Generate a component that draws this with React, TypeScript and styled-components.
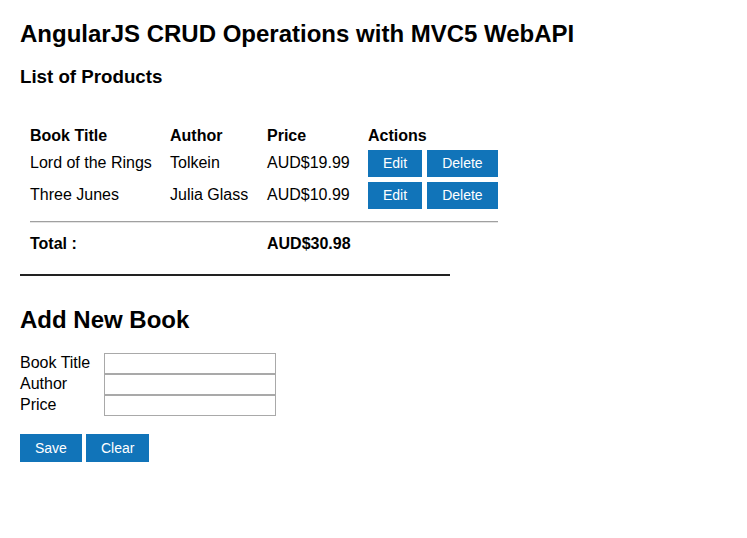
import styled, { createGlobalStyle } from 'styled-components';

const GlobalStyle = createGlobalStyle`
  body {
    margin: 0;
    background: #fff;
    color: #000;
    font-family: "Liberation Sans", Arial, sans-serif;
  }
`;

const Page = styled.main`
  padding: 20px;
`;

const Title = styled.h2`
  margin: 0;
  font-size: 24px;
  font-weight: bold;
`;

const SubTitle = styled.h3`
  margin: 18px 0 0;
  font-size: 18.72px;
  font-weight: bold;
`;

const Table = styled.table`
  margin: 37px 0 0 10px;
  border-collapse: collapse;
  table-layout: fixed;
  width: 468px;
  font-size: 16px;
`;

const HeadCell = styled.th`
  height: 22px;
  padding: 0;
  text-align: left;
  vertical-align: middle;
  font-weight: bold;
`;

const Cell = styled.td<{ $bold?: boolean }>`
  height: ${(p) => (p.$bold ? '19px' : '32px')};
  padding: 0;
  vertical-align: middle;
  font-weight: ${(p) => (p.$bold ? 'bold' : 'normal')};
  white-space: nowrap;
`;

const RuleCell = styled.td`
  padding: 10px 0 11px;
`;

const Rule = styled.div`
  border-top: 1px solid #a0a0a0;
  border-bottom: 1px solid #e4e4e4;
`;

const Actions = styled.div`
  display: flex;
  gap: 5px;
`;

const Button = styled.button<{ $tall?: boolean }>`
  padding: 5px 15px;
  border: none;
  background: #1174b9;
  color: #fff;
  font-family: "Liberation Sans", Arial, sans-serif;
  font-size: 14px;
  line-height: ${(p) => (p.$tall ? '18px' : '17px')};
  cursor: pointer;
`;

const Divider = styled.div`
  width: 430px;
  height: 2px;
  margin-top: 21px;
  background: #222;
`;

const FormTitle = styled.h2`
  margin: 30px 0 0;
  font-size: 24px;
  font-weight: bold;
`;

const Form = styled.div`
  display: grid;
  grid-template-columns: 84px 172px;
  grid-auto-rows: 21px;
  margin-top: 19px;
`;

const Label = styled.label`
  padding-top: 1px;
  font-size: 16px;
  line-height: 18px;
`;

const Input = styled.input`
  box-sizing: border-box;
  width: 172px;
  height: 21px;
  margin: 0;
  border: 1px solid #a9a9a9;
  padding: 1px 2px;
`;

const FormActions = styled.div`
  display: flex;
  gap: 4px;
  margin-top: 18px;
`;

const books = [
  { title: 'Lord of the Rings', author: 'Tolkein', price: 'AUD$19.99' },
  { title: 'Three Junes', author: 'Julia Glass', price: 'AUD$10.99' },
];

export default function App() {
  return (
    <Page>
      <GlobalStyle />
      <Title>AngularJS CRUD Operations with MVC5 WebAPI</Title>
      <SubTitle>List of Products</SubTitle>
      <Table>
        <colgroup>
          <col style={{ width: 140 }} />
          <col style={{ width: 97 }} />
          <col style={{ width: 101 }} />
          <col style={{ width: 130 }} />
        </colgroup>
        <thead>
          <tr>
            <HeadCell>Book Title</HeadCell>
            <HeadCell>Author</HeadCell>
            <HeadCell>Price</HeadCell>
            <HeadCell>Actions</HeadCell>
          </tr>
        </thead>
        <tbody>
          {books.map((b) => (
            <tr key={b.title}>
              <Cell>{b.title}</Cell>
              <Cell>{b.author}</Cell>
              <Cell>{b.price}</Cell>
              <Cell>
                <Actions>
                  <Button>Edit</Button>
                  <Button>Delete</Button>
                </Actions>
              </Cell>
            </tr>
          ))}
          <tr>
            <RuleCell colSpan={4}>
              <Rule />
            </RuleCell>
          </tr>
          <tr>
            <Cell $bold>Total :</Cell>
            <Cell $bold />
            <Cell $bold>AUD$30.98</Cell>
            <Cell $bold />
          </tr>
        </tbody>
      </Table>
      <Divider />
      <FormTitle>Add New Book</FormTitle>
      <Form>
        <Label>Book Title</Label>
        <Input />
        <Label>Author</Label>
        <Input />
        <Label>Price</Label>
        <Input />
      </Form>
      <FormActions>
        <Button $tall>Save</Button>
        <Button $tall>Clear</Button>
      </FormActions>
    </Page>
  );
}
